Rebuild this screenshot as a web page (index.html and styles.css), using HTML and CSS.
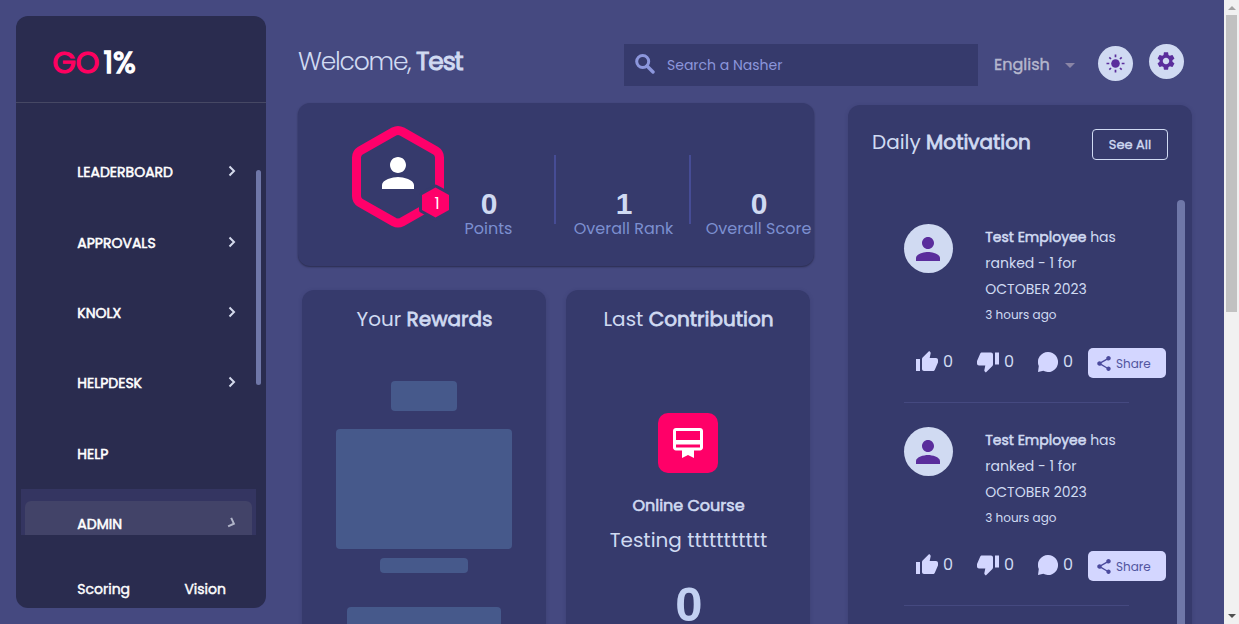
FILE: index.html
```
<!DOCTYPE html>
<html lang="en">
<head>
<meta charset="utf-8">
<title>GO1%</title>
<link rel="stylesheet" href="styles.css">
</head>
<body>
<svg class="defs" width="0" height="0" aria-hidden="true">
  <symbol id="person" viewBox="4 4 16 16"><path d="M12 12c2.210 0 4-1.790 4-4s-1.790-4-4-4-4 1.790-4 4 1.790 4 4 4zm0 2c-2.670 0-8 1.340-8 4v2h16v-2c0-2.660-5.330-4-8-4z"/></symbol>
  <symbol id="chev" viewBox="0 0 8 12"><path d="M1.500 1.500 6 6l-4.500 4.500" fill="none" stroke="currentColor" stroke-width="2"/></symbol>
  <symbol id="up" viewBox="1 1 22 20"><path d="M1 21h4V9H1v12zm22-11c0-1.100-.9-2-2-2h-6.310l.95-4.570.03-.32c0-.41-.17-.79-.44-1.060L14.170 1 7.590 7.590C7.220 7.950 7 8.450 7 9v10c0 1.100.9 2 2 2h9c.83 0 1.540-.5 1.840-1.220l3.020-7.050c.09-.23.14-.47.14-.73v-2z"/></symbol>
  <symbol id="down" viewBox="1 3 22 20"><path d="M15 3H6c-.83 0-1.540.5-1.840 1.220l-3.020 7.050c-.09.23-.14.47-.14.73v2c0 1.100.9 2 2 2h6.310l-.95 4.570-.03.32c0 .41.17.79.44 1.060L9.830 23l6.590-6.590c.36-.36.58-.86.58-1.410V5c0-1.100-.9-2-2-2zm4 0v12h4V3h-4z"/></symbol>
  <symbol id="chat" viewBox="0 0 20 20"><path d="M10 0a10 10 0 1 1-4.700 18.800L0 20l.8-5.900A10 10 0 0 1 10 0z"/></symbol>
  <symbol id="share" viewBox="3 2 18 20"><path d="M18 16.080c-.76 0-1.440.3-1.960.77L8.910 12.700c.05-.23.09-.46.09-.7s-.04-.47-.09-.7l7.050-4.110c.54.5 1.250.81 2.040.81 1.660 0 3-1.340 3-3s-1.340-3-3-3-3 1.340-3 3c0 .24.04.47.09.7L8.040 9.810C7.500 9.310 6.790 9 6 9c-1.660 0-3 1.340-3 3s1.340 3 3 3c.79 0 1.500-.31 2.040-.81l7.120 4.160c-.05.21-.08.43-.08.65 0 1.610 1.310 2.920 2.920 2.920s2.920-1.310 2.920-2.920-1.310-2.920-2.920-2.920z"/></symbol>
</svg>

<div class="app">
  <aside class="sidebar">
    <div class="logo"><span class="logo-go">GO</span><span class="logo-pct">1%</span></div>
    <nav class="nav">
      <a class="item"><span>LEADERBOARD</span><svg class="chev"><use href="#chev"/></svg></a>
      <a class="item"><span>APPROVALS</span><svg class="chev"><use href="#chev"/></svg></a>
      <a class="item"><span>KNOLX</span><svg class="chev"><use href="#chev"/></svg></a>
      <a class="item"><span>HELPDESK</span><svg class="chev"><use href="#chev"/></svg></a>
      <a class="item"><span>HELP</span></a>
      <a class="item active"><span class="active-in"><span>ADMIN</span><svg class="chev turning"><use href="#chev"/></svg></span></a>
      <i class="nav-thumb"></i>
    </nav>
    <div class="links"><span>Scoring</span><span>Vision</span></div>
  </aside>

  <main class="main">
    <header class="top">
      <h1 class="welcome">Welcome, <b>Test</b></h1>
      <div class="search">
        <svg width="20" height="20" viewBox="0 0 20 20"><circle cx="7.700" cy="7.500" r="6" fill="none" stroke="#8c96dc" stroke-width="3"/><path d="m12 12 6 6" stroke="#8c96dc" stroke-width="3.400" stroke-linecap="round"/></svg>
        <span>Search a Nasher</span>
      </div>
      <div class="lang"><span>English</span><i class="caret"></i></div>
      <button class="round sun">
        <svg width="19" height="19" viewBox="-9.500 -9.500 19 19"><circle r="4.300" fill="#5a2d9c"/><path d="M0-9v2.800M0 9V6.200M-9 0h2.800M9 0H6.200M-6.200-6.200l1.700 1.700M6.200-6.200 4.500-4.500M-6.200 6.200l1.700-1.700M6.200 6.200 4.500 4.500" stroke="#5a2d9c" stroke-width="1.700"/></svg>
      </button>
      <button class="round gear">
        <svg width="18" height="18" viewBox="2 2 20 20" fill="#5a2d9c"><path d="M19.140 12.940c.04-.3.06-.61.06-.94 0-.32-.02-.64-.07-.94l2.030-1.580c.18-.14.23-.41.12-.61l-1.920-3.320c-.12-.22-.37-.29-.59-.22l-2.390.96c-.5-.38-1.030-.7-1.620-.94l-.36-2.540c-.04-.24-.24-.41-.48-.41h-3.840c-.24 0-.43.17-.47.41l-.36 2.540c-.59.24-1.130.57-1.620.94l-2.390-.96c-.22-.08-.47 0-.59.22L2.740 8.870c-.12.21-.08.47.12.61l2.030 1.580c-.05.3-.09.63-.09.94s.02.64.07.94l-2.030 1.580c-.18.14-.23.41-.12.61l1.920 3.320c.12.22.37.29.59.22l2.390-.96c.5.38 1.030.7 1.620.94l.36 2.540c.05.24.24.41.48.41h3.840c.24 0 .44-.17.47-.41l.36-2.540c.59-.24 1.130-.56 1.620-.94l2.390.96c.22.08.47 0 .59-.22l1.920-3.320c.12-.22.07-.47-.12-.61l-2.010-1.580zM12 15.600c-1.980 0-3.600-1.620-3.600-3.600s1.620-3.600 3.600-3.600 3.600 1.620 3.600 3.600-1.620 3.600-3.600 3.600z"/></svg>
      </button>
    </header>

    <div class="cols">
      <div class="left">
        <section class="card stats">
          <div class="avatar">
            <svg width="100" height="106" viewBox="0 0 100 106">
              <path d="M44 7.500Q48 5.500 52 7.500L85.500 26.500Q89.500 29 89.500 33.500V72Q89.500 76.500 85.500 79L52 98Q48 100 44 98L10.500 79Q6.500 76.500 6.500 72V33.500Q6.500 29 10.500 26.500Z" fill="none" stroke="#ff006a" stroke-width="9"/>
              <path d="M85.500 63.500 99 71v15l-13.500 7.500L72 86V71Z" fill="#ff006a" stroke="#363a6c" stroke-width="6" stroke-linejoin="round" paint-order="stroke"/>
            </svg>
            <svg class="me"><use href="#person"/></svg>
            <span class="level">1</span>
          </div>
          <div class="stat points"><b>0</b><span>Points</span></div>
          <div class="stat line"><b>1</b><span>Overall Rank</span></div>
          <div class="stat line last"><b>0</b><span>Overall Score</span></div>
        </section>
        <div class="pair">
          <section class="card small">
            <h2>Your <b>Rewards</b></h2>
            <i class="sk s1"></i><i class="sk s2"></i><i class="sk s3"></i><i class="sk s4"></i>
          </section>
          <section class="card small">
            <h2>Last <b>Contribution</b></h2>
            <div class="badge"><svg width="30" height="30" viewBox="2 2 20 20" fill="#fff"><path d="M20 2H4c-1.110 0-2 .89-2 2v11c0 1.110.89 2 2 2h4v5l4-2 4 2v-5h4c1.110 0 2-.89 2-2V4c0-1.110-.89-2-2-2zm0 13H4v-2h16v2zm0-5H4V4h16v6z"/></svg></div>
            <div class="kind">Online Course</div>
            <div class="desc">Testing ttttttttttt</div>
            <div class="score">0</div>
          </section>
        </div>
      </div>

      <section class="card feed">
        <div class="feed-top"><h2>Daily <b>Motivation</b></h2><button class="see">See All</button></div>
        <div class="feed-body">
          <article class="post">
            <div class="who"><div class="face"><svg><use href="#person"/></svg></div>
              <div class="msg"><p><b>Test Employee</b> has</p><p>ranked - 1 for</p><p>OCTOBER 2023</p><p class="ago">3 hours ago</p></div></div>
            <div class="acts">
              <span class="act like"><svg width="22" height="20"><use href="#up"/></svg>0</span>
              <span class="act dislike"><svg width="22" height="21"><use href="#down"/></svg>0</span>
              <span class="act comment"><svg width="20" height="20"><use href="#chat"/></svg>0</span>
              <button class="share"><svg width="14" height="15"><use href="#share"/></svg>Share</button>
            </div>
          </article>
          <article class="post">
            <div class="who"><div class="face"><svg><use href="#person"/></svg></div>
              <div class="msg"><p><b>Test Employee</b> has</p><p>ranked - 1 for</p><p>OCTOBER 2023</p><p class="ago">3 hours ago</p></div></div>
            <div class="acts">
              <span class="act like"><svg width="22" height="20"><use href="#up"/></svg>0</span>
              <span class="act dislike"><svg width="22" height="21"><use href="#down"/></svg>0</span>
              <span class="act comment"><svg width="20" height="20"><use href="#chat"/></svg>0</span>
              <button class="share"><svg width="14" height="15"><use href="#share"/></svg>Share</button>
            </div>
          </article>
          <i class="feed-thumb"></i>
        </div>
      </section>
    </div>
  </main>

  <div class="scrollbar"><i class="arr up"></i><i class="thumb"></i><i class="arr down"></i></div>
</div>
</body>
</html>
```
FILE: styles.css
```
* { box-sizing: border-box; margin: 0; padding: 0; }
body { height: 624px; overflow: hidden; background: #454980; color: #d0daf2; font-family: Poppins, Inter, sans-serif; font-size: 14px; }
button { font: inherit; border: 0; }
b { font-weight: 400; }
i { display: block; }
.defs { position: absolute; }
.app { display: flex; height: 624px; }

/* heavier regular weight, keeps the regular advance widths */
.logo, .item, .links, .welcome b, h2 b, .lang, .see, .kind, .msg b { -webkit-text-stroke: .038em; }

.sidebar { flex: none; width: 250px; height: 592px; margin: 16px 0 0 16px; background: #2a2c4f; border-radius: 12px; color: #fff; }
.logo { height: 87px; border-bottom: 1px solid #464864; display: flex; align-items: center; padding: 7px 0 0 36.500px; gap: 4px; font-size: 30px; line-height: 36px; }
.logo-go { color: #ff0060; }
.logo-pct { font-size: 30px; -webkit-text-stroke: .045em; }
.nav { position: relative; height: 432px; overflow: hidden; padding: 34px 10px 0 5px; }
.item { display: flex; align-items: center; justify-content: space-between; height: 70.400px; padding: 1px 20px 0 56.300px; }
.chev { width: 8px; height: 12px; color: #d5daec; margin-top: -3px; }
.turning { transform: rotate(20deg); color: #b0b4c8; }
.active { background: #343561; padding: 12px 4px 0; }
.active-in { flex: 1; display: flex; align-items: center; justify-content: space-between; height: 58px; padding: 0 16px 12px 52.300px; background: #424368; border-radius: 6px; }
.nav-thumb { position: absolute; right: 5px; top: 67px; width: 5px; height: 215px; border-radius: 3px; background: #6f77a8; }
.links { display: flex; justify-content: space-between; padding: 46px 40px 0 61.300px; line-height: 17px; -webkit-text-stroke: .03em; }

.main { flex: none; width: 894px; margin-left: 32px; }
.top { display: flex; height: 103px; padding-top: 44px; }
.welcome { width: 326px; font-size: 25px; font-weight: 300; line-height: 35px; letter-spacing: -1.200px; }
.search { width: 354px; height: 42px; background: #363a6c; color: #8c96dc; display: flex; align-items: center; padding-left: 11px; gap: 12px; }
.search svg { margin-top: -3px; }
.lang { display: flex; align-items: center; justify-content: space-between; height: 41px; width: 81px; margin: 0 22px 0 16px; font-size: 16px; color: #b5b7cd; -webkit-text-stroke: .025em; }
.caret { border: 5px solid transparent; border-top-color: #8a85a6; border-bottom: 0; margin-top: 2px; }
.round { width: 35px; height: 35px; border-radius: 50%; background: #d0daf2; display: flex; align-items: center; justify-content: center; }
.sun { margin: 2px 0 0 1px; padding: 0 1px 1px 0; }
.gear { margin-left: 16px; padding: 0 1px 1px 0; }

.cols { display: flex; justify-content: space-between; }
.left { width: 516px; }
.card { background: #363a6c; border-radius: 12px; box-shadow: 0 1px 4px rgba(30, 30, 70, .2); }
.stats { height: 163px; display: flex; box-shadow: 0 1px 2px #292b4c; }
.avatar { position: relative; flex: none; width: 100px; margin: 21px 0 0 52px; }
.avatar svg { display: block; }
.avatar .me { position: absolute; left: 32px; top: 33px; width: 32px; height: 32px; fill: #fff; }
.level { position: absolute; left: 72px; top: 70px; width: 30px; text-align: center; color: #fff; font-size: 16px; line-height: 20px; }
.stat { flex: none; display: flex; flex-direction: column; align-items: center; height: 69px; margin-top: 52px; padding-top: 33px; font-size: 16px; color: #7c8fd0; white-space: nowrap; }
.stat.line { width: 135px; padding-left: 2px; border-left: 2px solid #464c95; }
.stat.points { width: 104px; padding-right: 27px; }
.stat.last { width: 137px; padding-left: 0; }
.stat b { font: bold 30px/32px "Liberation Sans", sans-serif; color: #d0daf2; padding-left: 1px; }
.stat span { line-height: 17px; }
.pair { display: flex; gap: 20px; padding: 24px 4px 0; }
.small { width: 244px; height: 360px; display: flex; flex-direction: column; align-items: center; padding-top: 14px; }
h2 { font-size: 20px; font-weight: 400; line-height: 30px; }
.small h2 { padding-left: 1px; }
.sk { flex: none; background: #46598b; border-radius: 4px; }
.s1 { width: 66px; height: 30px; margin-top: 47px; }
.s2 { width: 176px; height: 120px; margin-top: 18px; }
.s3 { width: 88px; height: 15px; margin-top: 9px; }
.s4 { width: 154px; height: 40px; margin-top: 34px; }
.badge { width: 60px; height: 60px; margin-top: 79px; border-radius: 10px; background: #ff0068; display: flex; align-items: center; justify-content: center; }
.kind { margin-top: 21px; padding-left: 1px; font-size: 16px; line-height: 24px; }
.desc { margin-top: 7px; padding-left: 1px; font-size: 20px; line-height: 30px; }
.score { margin-top: 24px; padding-left: 2px; font: bold 49px/50px "Liberation Sans", sans-serif; color: #c2d0f2; }

.feed { width: 344px; height: 540px; margin-top: 2px; }
.feed-top { display: flex; justify-content: space-between; padding: 22px 24px 0; }
.see { width: 76px; height: 31px; margin-top: 2px; border: 1px solid #d0daf2; border-radius: 4px; background: none; color: inherit; font-size: 13px; -webkit-text-stroke: .028em; }
.feed-body { position: relative; height: 440px; margin-top: 42px; padding: 22px 0 0 56px; }
.post { height: 179px; width: 225px; border-bottom: 1px solid #454980; margin-bottom: 24px; }
.who { display: flex; }
.face { flex: none; width: 49px; height: 49px; padding-right: 1px; border-radius: 50%; background: #d0daf2; display: flex; align-items: center; justify-content: center; }
.face svg { width: 24px; height: 24px; fill: #5a2d9c; }
.msg { margin-left: 32.300px; line-height: 26px; white-space: nowrap; }
.msg .ago { font-size: 12px; }
.acts { display: flex; align-items: center; width: 262px; height: 30px; margin-top: 20px; padding-left: 12px; font-size: 16px; }
.act { display: flex; align-items: center; gap: 5px; height: 26px; padding-bottom: 3px; }
.act svg { fill: #d3d6ff; }
.like { width: 61px; }
.dislike { width: 61px; }
.comment { width: 50px; }
.like svg { margin-top: -1px; }
.dislike svg { margin-top: 1px; }
.share { flex: none; width: 78px; height: 30px; padding: 1px 0 0 9px; border-radius: 5px; background: #d3d6ff; color: #5155a0; display: flex; align-items: center; gap: 5px; font-size: 12px; }
.share svg { fill: #4b4a9d; margin-top: -1px; }
.feed-thumb { position: absolute; right: 7px; top: -2px; width: 8px; height: 440px; border-radius: 4px; background: #6f77a8; }

.scrollbar { flex: none; width: 15px; height: 624px; margin-left: auto; background: #f1f1f1; padding: 6px 2px 0; display: flex; flex-direction: column; align-items: center; }
.arr { border: 4px solid transparent; }
.arr.up { border-bottom-color: #a3a3a3; border-top: 0; }
.thumb { width: 11px; height: 297px; margin-top: 5px; background: #c1c1c1; }
.arr.down { border-top-color: #505050; border-bottom: 0; margin-top: auto; margin-bottom: 6px; }
```
